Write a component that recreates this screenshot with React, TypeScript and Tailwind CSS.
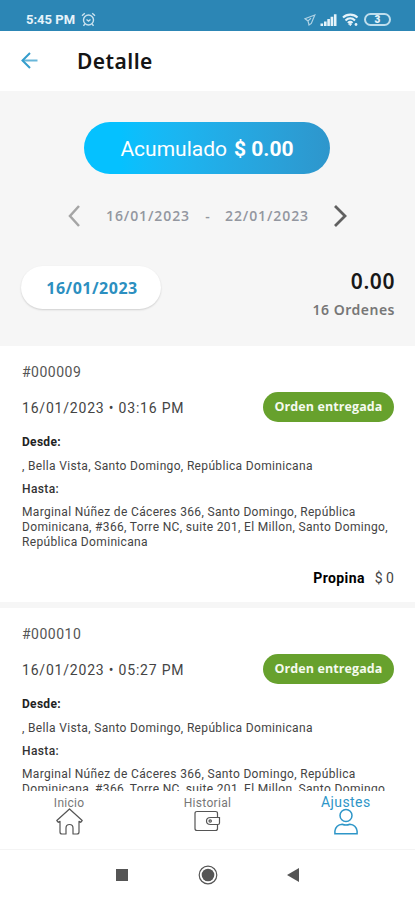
const orders = [
  { id: "#000009", date: "16/01/2023", time: "03:16 PM" },
  { id: "#000010", date: "16/01/2023", time: "05:27 PM" },
]

function StatusBar() {
  return (
    <div className="flex h-[31px] shrink-0 items-center bg-[#2c86b5] pl-[26px] pr-[24px] pt-2 text-[#e6f3fa]">
      <span className="w-[55px] whitespace-nowrap font-['Roboto'] text-[13px] font-bold">5:45 PM</span>
      <svg width="15" height="15" viewBox="0 0 15 15" fill="none" stroke="currentColor" strokeWidth="1.4" opacity="0.85">
        <circle cx="7.5" cy="8" r="5" />
        <path d="M1 3.8 3.8 1.2M14 3.8 11.2 1.2M3.8 12 2.5 13.8M11.2 12l1.3 1.8M5.5 7.5l2 1.5 2-1.5" />
      </svg>
      <div className="ml-auto flex items-center">
        <svg width="12" height="12" viewBox="0 0 12 12" fill="none" stroke="currentColor" strokeWidth="1.2" opacity="0.7">
          <path d="M10.8 1 1 4.8l3 2.1L5 11l2.3-1.6L10.8 1ZM4 6.9l3-2.6" />
        </svg>
        <svg className="ml-[4px]" width="17" height="12" viewBox="0 0 17 12" fill="currentColor">
          <path d="M.5 9.5h2.6V12H.5zM4 7.5h2.6V12H4zM7.3 5h2.6v7H7.3zM10.6 2.7h2.6V12h-2.6zM13.9.3h2.6V12h-2.6z" />
        </svg>
        <svg className="ml-[5px]" width="17" height="14" viewBox="0 0 17 14" fill="none" stroke="currentColor" strokeWidth="2.1">
          <path d="M1 4.5C5 .6 11.5.6 15.5 4.5M3.5 7.400c2.800-2.700 6.700-2.700 9.500 0M5.900 10c1.500-1.400 3.200-1.400 4.600 0" />
          <path d="m8.200 10 1.300 1.300-1.300 1.300-1.300-1.300z" fill="currentColor" strokeWidth="1" />
          <circle cx="14" cy="11.500" r="1.400" fill="currentColor" stroke="none" />
        </svg>
        <span className="ml-[5px] flex h-[13px] w-[27px] items-center justify-center rounded-full border-2 border-[#bfdeed] font-['Roboto'] text-[10px] font-black leading-none">
          3
        </span>
      </div>
    </div>
  )
}

function Order({ id, date, time }: { id: string; date: string; time: string }) {
  return (
    <article className="h-[262px] shrink-0 border-b-[6px] border-[#f6f6f6] bg-white pl-[22px] pr-[21px] pt-4 font-['Roboto'] text-[#444]">
      <h2 className="h-5 text-[14px] leading-5 tracking-[0.5px] text-[#555]">{id}</h2>
      <div className="mt-[10px] flex h-[30px] items-center justify-between">
        <p className="whitespace-pre pt-[2px] text-[14px] tracking-[0.8px]">{date} • {time}</p>
        <span className="flex h-[30px] w-[131px] items-center justify-center rounded-full bg-[#67a12d] pt-px font-['Open_Sans'] text-[12.5px] font-bold tracking-[0.1px] text-[#f5faef]">
          Orden entregada
        </span>
      </div>
      <h3 className="mt-[13px] text-[12px] font-bold leading-[15px] tracking-[0.3px] text-[#222]">Desde:</h3>
      <p className="mt-[9px] whitespace-nowrap text-[12px] leading-[15px] tracking-[0.34px]">, Bella Vista, Santo Domingo, República Dominicana</p>
      <h3 className="mt-[8px] text-[12px] font-medium leading-[15px] tracking-[0.4px] text-[#333]">Hasta:</h3>
      <p className="mt-[8px] whitespace-nowrap text-[12px] leading-[15px] tracking-[0.34px]">
        Marginal Núñez de Cáceres 366, Santo Domingo, República
        <br />
        Dominicana, #366, Torre NC, suite 201, El Millon, Santo Domingo,
        <br />
        República Dominicana
      </p>
      <p className="mt-[18px] flex justify-end gap-[10px] text-[14px] leading-5">
        <span className="font-bold tracking-[0.4px] text-black">Propina</span>
        <span>$ 0</span>
      </p>
    </article>
  )
}

function TabBar() {
  return (
    <nav className="flex h-[59px] shrink-0 border-b border-[#f4f4f4] bg-white font-['Roboto'] text-[12px] text-[#777]">
      <div className="flex flex-1 flex-col items-center pt-[5px]">
        <span className="leading-[14px] tracking-[0.3px]">Inicio</span>
        <svg className="-mt-[2px]" width="27" height="27" viewBox="0 0 27 27" fill="none" stroke="#555" strokeWidth="1.2" strokeLinejoin="round">
          <path d="M13.500 1 .8 12.500l1.500 1.800 1.700-1v10.700q0 2 2 2h4v-6q0-3.500 3.500-3.500t3.500 3.500v6h4q2 0 2-2V13.300l1.700 1 1.500-1.800Z" />
        </svg>
      </div>
      <div className="flex flex-1 flex-col items-center pt-[5px]">
        <span className="leading-[14px] tracking-[0.3px]">Historial</span>
        <svg width="27" height="23" viewBox="0 0 27 23" fill="none" stroke="#555" strokeWidth="1.200">
          <path d="M23.500 7.500V3.500q0-2-2-2H3q-2 0-2 2v15q0 2 2 2h18.500q2 0 2-2V14.500" />
          <path d="M25.500 7.500h-9q-4 0-4 3.500t4 3.500h7.500q1.500 0 1.500-1.500Z" />
          <circle cx="16.200" cy="11" r="1.200" />
        </svg>
      </div>
      <div className="flex flex-1 flex-col items-center pt-[3px] text-[#2e96c8]">
        <span className="text-[14px] leading-[16px] tracking-[0.4px]">Ajustes</span>
        <svg className="-mt-[2px]" width="26" height="27" viewBox="0 0 26 27" fill="none" stroke="currentColor" strokeWidth="1.500">
          <circle cx="13" cy="7.500" r="6" />
          <path d="M1.900 25.700V23q1-6.300 7.300-6.800 3.800 1.600 7.600 0 6.300.5 7.300 6.800v2.700Z" />
        </svg>
      </div>
    </nav>
  )
}

export default function App() {
  return (
    <div className="flex h-[900px] w-[415px] flex-col overflow-hidden bg-white">
      <StatusBar />
      <header className="flex h-[60px] shrink-0 items-center pl-[21px]">
        <svg width="18" height="18" viewBox="0 0 18 18" fill="none" stroke="#359dcc" strokeWidth="2">
          <path d="M9 1 1.500 8.500 9 16" />
          <path d="M1.500 8.500H16.500" strokeOpacity="0.75" />
        </svg>
        <h1 className="ml-[38px] pt-px font-['Noto_Sans'] text-[21px] font-semibold tracking-[0.45px] text-[#151515]">Detalle</h1>
      </header>

      <section className="h-[255px] shrink-0 bg-[#f6f6f6] pt-[31px]">
        <div className="ml-[84px] flex h-[52px] w-[246px] items-center justify-center gap-[7px] rounded-full bg-linear-to-r from-[#05c1ff] from-15% to-[#2e96cc] pt-1 font-['Roboto'] text-[21px] text-white">
          <span>Acumulado</span>
          <b>$ 0.00</b>
        </div>
        <div className="mt-[28px] flex h-[27px] items-center pl-[68px] font-['Open_Sans'] text-[14px] font-semibold text-[#9397a0]">
          <svg width="12" height="22" viewBox="0 0 12 22" fill="none" stroke="#a5a5a5" strokeWidth="2.500">
            <path d="M11 1 2 11l9 10" />
          </svg>
          <span className="ml-[26px] w-[84px] tracking-[0.9px]">16/01/2023</span>
          <span className="w-[35px] text-center">-</span>
          <span className="w-[84px] tracking-[0.9px]">22/01/2023</span>
          <svg className="ml-[25px]" width="13" height="22" viewBox="0 0 13 22" fill="none" stroke="#606060" strokeWidth="2.800">
            <path d="m1 1 10 10L1 21" />
          </svg>
        </div>
        <div className="mt-[37px] flex items-start justify-between pl-[21px] pr-[20px]">
          <div className="flex h-[43px] w-[140px] items-center justify-center rounded-full bg-white pl-[2px] font-['Open_Sans'] text-[16px] font-bold tracking-[0.5px] text-[#2c8fc0] shadow-[0_1px_2px_rgba(0,0,0,0.16)]">
            16/01/2023
          </div>
          <div className="text-right font-['Noto_Sans']">
            <p className="text-[21px] font-semibold leading-[30px] tracking-[0.6px] text-[#181818]">0.00</p>
            <p className="mt-[4px] text-[14px] font-semibold leading-5 tracking-[0.5px] text-[#777]">16 Ordenes</p>
          </div>
        </div>
      </section>

      <main className="flex h-[445px] shrink-0 flex-col overflow-hidden">
        {orders.map((order) => (
          <Order key={order.id} {...order} />
        ))}
      </main>

      <TabBar />

      <footer className="flex h-[50px] shrink-0 items-center pl-[116px] text-[#555]">
        <svg width="12" height="12" viewBox="0 0 12 12" fill="currentColor">
          <path d="M0 0h12v12H0z" />
        </svg>
        <svg className="ml-[70px]" width="20" height="20" viewBox="0 0 20 20">
          <circle cx="10" cy="10" r="8.800" fill="none" stroke="currentColor" strokeWidth="1.200" />
          <circle cx="10" cy="10" r="6.300" fill="currentColor" />
        </svg>
        <svg className="ml-[69px]" width="12" height="14" viewBox="0 0 12 14" fill="currentColor">
          <path d="M12 0v14L0 7z" />
        </svg>
      </footer>
    </div>
  )
}
